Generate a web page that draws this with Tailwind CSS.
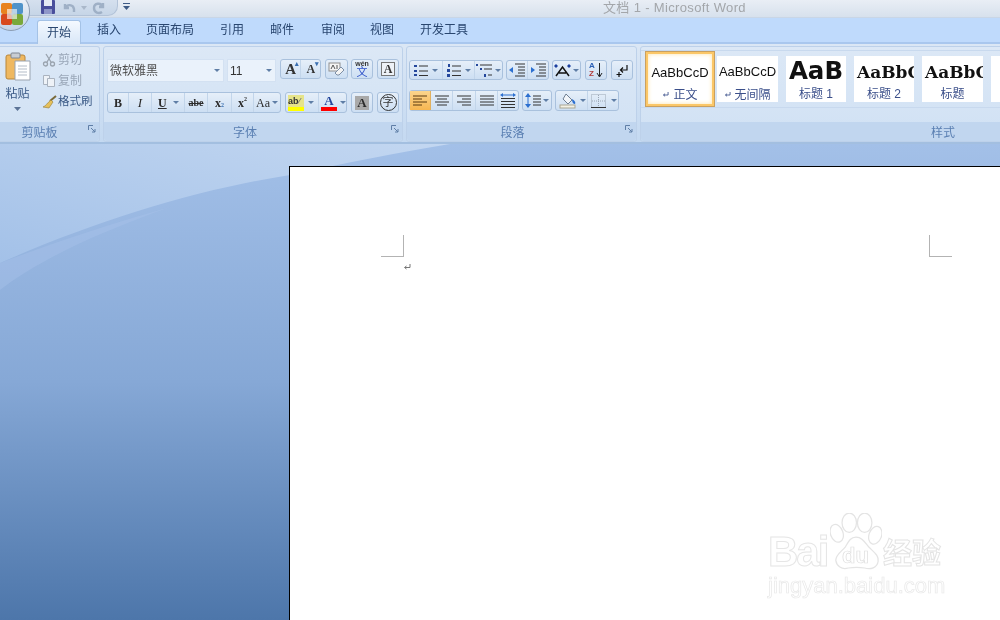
<!DOCTYPE html>
<html lang="en">
<head>
<meta charset="UTF-8">
<title>文档 1 - Microsoft Word</title>
<script src="https://cdn.jsdelivr.net/npm/@tailwindcss/browser@4"></script>
</head>
<body class="w-[1000px] h-[620px] overflow-hidden flex flex-col relative blur-[0.35px] font-['Liberation_Sans','Noto_Sans_CJK_SC',sans-serif] text-[12px]">

<!-- office button -->
<div class="absolute left-[-8px] top-[-8px] w-[38px] h-[39px] pt-[5px] pl-[1px] rounded-full bg-gradient-to-b from-[#f4f7fb] to-[#c3d3e6] border border-[#8c9db3] flex items-center justify-center z-10">
  <svg width="26" height="26" viewBox="0 0 26 26">
    <rect x="2" y="2" width="11" height="11" rx="2" fill="#e8821e"/>
    <rect x="13" y="2" width="11" height="11" rx="2" fill="#4f93c9"/>
    <rect x="2" y="13" width="11" height="11" rx="2" fill="#d8491d"/>
    <rect x="13" y="13" width="11" height="11" rx="2" fill="#79a83a"/>
    <path d="M8 8h10v10H8z" fill="#fff" opacity=".6"/>
    <path d="M13 8v10M8 13h10" stroke="#b9c4d2" stroke-width=".8"/>
  </svg>
</div>

<!-- title bar -->
<header class="h-[18px] shrink-0 flex bg-gradient-to-b from-[#e9eef5] to-[#d7e1ed] border-b border-[#c9d6e6]">
  <div class="w-[118px] h-[16px] pl-[40px] flex items-center rounded-br-[10px] bg-gradient-to-b from-[#d5e0ee] to-[#c6d5e7] border-r border-b border-[#b3c3d8]">
    <svg width="16" height="16" viewBox="0 0 16 16">
      <rect x="1" y="0" width="14" height="14" rx="1" fill="#4a4f9c"/>
      <rect x="4" y="0" width="8" height="6" fill="#e6ebf5"/>
      <rect x="4" y="9" width="8" height="5" fill="#8f97c9"/>
    </svg>
    <svg class="ml-[6px]" width="18" height="14" viewBox="0 0 18 14" fill="none" stroke="#9fb0c6" stroke-width="2.4">
      <path d="M3 3v4h4M3 7c2-4 8-4 9 1v3"/>
    </svg>
    <svg class="ml-[1px]" width="6" height="4" viewBox="0 0 6 4"><path d="M0 0h6L3 4z" fill="#aab8ca"/></svg>
    <svg class="ml-[4px]" width="15" height="14" viewBox="0 0 15 14" fill="none" stroke="#9fb0c6" stroke-width="2.4">
      <path d="M12 2v4H8M12 6C10 1 3 2 3 7s5 6 8 4"/>
    </svg>
  </div>
  <svg class="ml-[5px] mt-[2px]" width="7" height="8" viewBox="0 0 7 8"><path d="M0 1h7v1H0zM0 4h7L3.500 8z" fill="#3d5a85"/></svg>
  <div class="ml-[473px] mt-[-1px] text-[13px] leading-[18px] tracking-[0.35px] text-[#a3a6aa]">文档 1 - Microsoft Word</div>
</header>

<!-- tabs -->
<nav class="h-[26px] shrink-0 flex items-end bg-[#bfdafc] text-[#29466f] border-b-2 border-[#a9c7ee]">
  <div class="w-[37px]"></div>
  <div class="w-[44px] h-[24px] mb-[-2px] rounded-t-[3px] border border-b-0 border-[#a4c2e6] bg-gradient-to-b from-[#f4f9ff] to-[#d9e7f7] flex items-center justify-center">开始</div>
  <div class="w-[56px] h-[24px] flex items-center justify-center">插入</div>
  <div class="w-[66px] h-[24px] flex items-center justify-center">页面布局</div>
  <div class="w-[58px] h-[24px] flex items-center justify-center">引用</div>
  <div class="w-[42px] h-[24px] flex items-center justify-center">邮件</div>
  <div class="w-[60px] h-[24px] flex items-center justify-center">审阅</div>
  <div class="w-[38px] h-[24px] flex items-center justify-center">视图</div>
  <div class="w-[86px] h-[24px] flex items-center justify-center">开发工具</div>
</nav>

<!-- ribbon -->
<section class="h-[100px] shrink-0 flex gap-[3px] pt-[2px] bg-gradient-to-b from-[#dbe7f5] to-[#c4d9f1] border-b-2 border-[#a3bfe0]">

  <!-- clipboard -->
  <div class="w-[100px] h-[96px] shrink-0 flex flex-col rounded-r-[3px] border border-l-0 border-[#bdd1ea] bg-gradient-to-b from-[#dce8f6] to-[#d0e1f4]">
    <div class="h-[76px] flex">
      <div class="w-[35px] flex flex-col items-center pt-[5px] text-[#3b5a86]">
        <svg width="26" height="29" viewBox="0 0 26 29">
          <rect x="1" y="3" width="19" height="24" rx="2" fill="#efb860" stroke="#b8863b"/>
          <rect x="6" y="1" width="9" height="5" rx="1" fill="#c8cdd4" stroke="#7f8794"/>
          <path d="M10 9h15v19H10z" fill="#fff" stroke="#9aa3b0"/>
          <path d="M13 14h9M13 17h9M13 20h9M13 23h9" stroke="#b3bcc8"/>
        </svg>
        <div class="mt-[5px] leading-[16px]">粘贴</div>
        <svg class="mt-[5px]" width="7" height="4" viewBox="0 0 7 4"><path d="M0 0h7L3.500 4z" fill="#5b7396"/></svg>
      </div>
      <div class="ml-[7px] flex flex-col pt-[4px] gap-[3px]">
        <div class="h-[18px] flex items-center gap-[2px] text-[#9aa7b8]">
          <svg width="14" height="14" viewBox="0 0 14 14" fill="none" stroke="#9aa3ae" stroke-width="1.300"><path d="M4 1l5 8M10 1L5 9"/><circle cx="3.500" cy="11" r="2"/><circle cx="10.500" cy="11" r="2"/></svg>
          <span>剪切</span>
        </div>
        <div class="h-[18px] flex items-center gap-[2px] text-[#9aa7b8]">
          <svg width="14" height="14" viewBox="0 0 14 14" fill="#eef2f7" stroke="#aab3bf"><path d="M1.500 1.500h6v9h-6z"/><path d="M5.500 4.500h7v8h-7z"/></svg>
          <span>复制</span>
        </div>
        <div class="h-[18px] flex items-center gap-[1px] text-[#3b5a86]">
          <svg width="15" height="14" viewBox="0 0 15 14"><path d="M14 1L8 6" stroke="#7a6a3a" stroke-width="2"/><path d="M9 5l2 2-4 6-6-1c3-1 4-4 8-7z" fill="#e6c05a" stroke="#927a36" stroke-width=".6"/></svg>
          <span class="text-[11.500px]">格式刷</span>
        </div>
      </div>
    </div>
    <div class="h-[19px] pt-[3px] pr-[20px] relative flex items-center justify-center bg-[#c1d6ef] rounded-br-[3px] text-[#5a7fb2]">
      剪贴板
      <svg class="absolute right-[3px] top-[3px]" width="8" height="8" viewBox="0 0 8 8" fill="none" stroke="#5f7ea6"><path d="M.5 5V.5H5"/><path d="M3 3l4 4M7 4v3H4"/></svg>
    </div>
  </div>

  <!-- font -->
  <div class="w-[300px] h-[96px] shrink-0 flex flex-col rounded-[3px] border border-[#bdd1ea] bg-gradient-to-b from-[#dce8f6] to-[#d0e1f4]">
    <div class="h-[76px] pl-[3px] pt-[12px] flex flex-col gap-[10px]">
      <div class="flex items-start h-[23px]">
        <div class="w-[117px] h-[23px] flex items-center justify-between px-[2px] pr-[3px] bg-[#eaf2fb] border border-[#d3e1f2] text-[#4d4d4d]">微软雅黑
          <svg width="6" height="3" viewBox="0 0 6 3"><path d="M0 0h6L3 3z" fill="#5f7ea6"/></svg>
        </div>
        <div class="w-[49px] h-[23px] ml-[3px] flex items-center justify-between px-[2px] pr-[3px] bg-[#eaf2fb] border border-[#d3e1f2] text-[#333]">11
          <svg width="6" height="3" viewBox="0 0 6 3"><path d="M0 0h6L3 3z" fill="#5f7ea6"/></svg>
        </div>
        <div class="w-[41px] h-[20px] ml-[4px] flex border border-[#a9c1dd] rounded-[3px] bg-gradient-to-b from-[#e6eff9] to-[#cddff3] font-['Liberation_Serif',serif] font-bold text-[#333]">
          <div class="w-[21px] border-r border-[#c2d5ea] flex items-center justify-center text-[15px] leading-none relative">A<span class="absolute top-[1px] right-[1px] text-[7px] text-[#3a6fb0]">▴</span></div>
          <div class="w-[19px] flex items-center justify-center text-[12px] leading-none relative">A<span class="absolute top-[1px] right-[1px] text-[7px] text-[#3a6fb0]">▾</span></div>
        </div>
        <div class="w-[23px] h-[20px] ml-[4px] flex items-center justify-center border border-[#a9c1dd] rounded-[3px] bg-gradient-to-b from-[#e6eff9] to-[#cddff3]">
          <svg width="17" height="15" viewBox="0 0 17 15"><rect x="1" y="1" width="11" height="8" fill="#f5f5f5" stroke="#8f8f8f"/><path d="M3 7l2-4 2 4M9 3v4" stroke="#555" fill="none"/><path d="M7 11l6-6 3 3-5 5H9z" fill="#f4f4f4" stroke="#7d8fa6"/></svg>
        </div>
        <div class="w-[22px] h-[20px] ml-[3px] flex flex-col items-center justify-center border border-[#a9c1dd] rounded-[3px] bg-gradient-to-b from-[#e6eff9] to-[#cddff3] leading-none">
          <span class="text-[7px] font-bold text-[#333] leading-[7px]">wén</span>
          <span class="text-[11px] text-[#2c50c8] leading-[11px]">文</span>
        </div>
        <div class="w-[22px] h-[20px] ml-[4px] flex items-center justify-center border border-[#a9c1dd] rounded-[3px] bg-gradient-to-b from-[#e6eff9] to-[#cddff3]">
          <span class="w-[14px] h-[14px] border border-[#777] bg-[#eef2f7] flex items-center justify-center font-['Liberation_Serif',serif] font-bold text-[12px] text-[#333]">A</span>
        </div>
      </div>
      <div class="flex items-start h-[21px]">
        <div class="w-[174px] h-[21px] flex border border-[#a9c1dd] rounded-[3px] bg-gradient-to-b from-[#e6eff9] to-[#cddff3] font-['Liberation_Serif',serif] font-bold text-[#2b2b2b]">
          <div class="w-[21px] flex items-center justify-center text-[12px] border-r border-[#c2d5ea]">B</div>
          <div class="w-[23px] flex items-center justify-center text-[13px] italic font-normal border-r border-[#c2d5ea]">I</div>
          <div class="w-[33px] flex items-center justify-start pl-[6px] gap-[6px] text-[12px] underline border-r border-[#c2d5ea]">U<svg width="6" height="3" viewBox="0 0 6 3"><path d="M0 0h6L3 3z" fill="#5f7ea6"/></svg></div>
          <div class="w-[23px] flex items-center justify-center text-[10px] line-through border-r border-[#c2d5ea]">abe</div>
          <div class="w-[24px] flex items-center justify-center text-[12px] border-r border-[#c2d5ea]">x<span class="text-[6px] mt-[6px] text-[#3a6fb0]">2</span></div>
          <div class="w-[22px] flex items-center justify-center text-[12px] border-r border-[#c2d5ea]">x<span class="text-[6px] mb-[6px]">2</span></div>
          <div class="flex-1 flex items-center justify-center gap-[2px] text-[12px] font-normal">Aa<svg width="6" height="3" viewBox="0 0 6 3"><path d="M0 0h6L3 3z" fill="#5f7ea6"/></svg></div>
        </div>
        <div class="w-[62px] h-[21px] ml-[4px] flex border border-[#a9c1dd] rounded-[3px] bg-gradient-to-b from-[#e6eff9] to-[#cddff3]">
          <div class="w-[33px] flex items-center pl-[2px] gap-[4px] border-r border-[#c2d5ea]">
            <div class="w-[16px] flex flex-col items-stretch">
              <span class="text-[9px] leading-[12px] bg-[#e6e48a] text-[#333] font-bold">ab<span class="text-[#777]">⁄</span></span>
              <span class="h-[4px] bg-[#ffff00]"></span>
            </div>
            <svg width="6" height="3" viewBox="0 0 6 3"><path d="M0 0h6L3 3z" fill="#5f7ea6"/></svg>
          </div>
          <div class="flex-1 flex items-center pl-[2px] gap-[3px]">
            <div class="w-[16px] flex flex-col items-center">
              <span class="font-['Liberation_Serif',serif] font-bold text-[13px] leading-[12px] text-[#24479c]">A</span>
              <span class="w-[16px] h-[4px] bg-[#ff0000]"></span>
            </div>
            <svg width="6" height="3" viewBox="0 0 6 3"><path d="M0 0h6L3 3z" fill="#5f7ea6"/></svg>
          </div>
        </div>
        <div class="w-[22px] h-[21px] ml-[4px] flex items-center justify-center border border-[#a9c1dd] rounded-[3px] bg-gradient-to-b from-[#e6eff9] to-[#cddff3]">
          <span class="w-[14px] h-[14px] bg-[#a9a9a9] flex items-center justify-center font-['Liberation_Serif',serif] font-bold text-[13px] text-[#2b2b2b]">A</span>
        </div>
        <div class="w-[22px] h-[21px] ml-[4px] flex items-center justify-center border border-[#a9c1dd] rounded-[3px] bg-gradient-to-b from-[#e6eff9] to-[#cddff3]">
          <span class="w-[17px] h-[17px] rounded-full border border-[#333] flex items-center justify-center text-[11px] leading-none text-[#333]">字</span>
        </div>
      </div>
    </div>
    <div class="h-[19px] pt-[3px] pr-[16px] relative flex items-center justify-center bg-[#c1d6ef] rounded-b-[3px] text-[#5a7fb2]">
      字体
      <svg class="absolute right-[3px] top-[3px]" width="8" height="8" viewBox="0 0 8 8" fill="none" stroke="#5f7ea6"><path d="M.5 5V.5H5"/><path d="M3 3l4 4M7 4v3H4"/></svg>
    </div>
  </div>

  <!-- paragraph -->
  <div class="w-[231px] h-[96px] shrink-0 flex flex-col rounded-[3px] border border-[#bdd1ea] bg-gradient-to-b from-[#dce8f6] to-[#d0e1f4]">
    <div class="h-[76px] pl-[2px] pt-[13px] flex flex-col gap-[10px]">
      <div class="flex items-start h-[20px]">
        <div class="w-[94px] h-[20px] flex border border-[#a9c1dd] rounded-[3px] bg-gradient-to-b from-[#e6eff9] to-[#cddff3]">
          <div class="w-[33px] flex items-center justify-center gap-[4px] border-r border-[#c2d5ea]">
            <svg width="14" height="13" viewBox="0 0 14 13"><path d="M0 1h3v2H0zM0 6h3v2H0zM0 10h3v2H0z" fill="#24479c"/><path d="M5 2h9M5 7h9M5 11.500h9" stroke="#333"/></svg>
            <svg width="6" height="3" viewBox="0 0 6 3"><path d="M0 0h6L3 3z" fill="#5f7ea6"/></svg>
          </div>
          <div class="w-[32px] flex items-center justify-center gap-[4px] border-r border-[#c2d5ea]">
            <svg width="14" height="13" viewBox="0 0 14 13"><path d="M1 0h2v3H1zM0 5h3v3H0zM0 10h3v3H0z" fill="#24479c"/><path d="M5 2h9M5 7h9M5 11.500h9" stroke="#333"/></svg>
            <svg width="6" height="3" viewBox="0 0 6 3"><path d="M0 0h6L3 3z" fill="#5f7ea6"/></svg>
          </div>
          <div class="flex-1 flex items-center justify-center gap-[2px]">
            <svg width="17" height="14" viewBox="0 0 17 14"><path d="M0 1h2v2H0zM4 5h2v2H4zM8 11h2v3H8z" fill="#24479c"/><path d="M4 2h12M8 6h8M12 12h4" stroke="#333"/></svg>
            <svg width="6" height="3" viewBox="0 0 6 3"><path d="M0 0h6L3 3z" fill="#5f7ea6"/></svg>
          </div>
        </div>
        <div class="w-[43px] h-[20px] ml-[3px] flex border border-[#a9c1dd] rounded-[3px] bg-gradient-to-b from-[#e6eff9] to-[#cddff3]">
          <div class="w-[21px] flex items-center justify-center border-r border-[#c2d5ea]">
            <svg width="16" height="14" viewBox="0 0 16 14"><path d="M6 1h10M9 4h7M9 7h7M9 10h7M6 13h10" stroke="#333"/><path d="M0 7l4-3v6z" fill="#2b6fd0"/></svg>
          </div>
          <div class="flex-1 flex items-center justify-center">
            <svg width="16" height="14" viewBox="0 0 16 14"><path d="M6 1h10M9 4h7M9 7h7M9 10h7M6 13h10" stroke="#333"/><path d="M5 7L1 4v6z" fill="#2b6fd0"/></svg>
          </div>
        </div>
        <div class="w-[29px] h-[20px] ml-[3px] flex items-center justify-center gap-[2px] border border-[#a9c1dd] rounded-[3px] bg-gradient-to-b from-[#e6eff9] to-[#cddff3]">
          <svg width="17" height="14" viewBox="0 0 17 14"><path d="M2 13L8.500 4 15 13M5 10h7" stroke="#111" stroke-width="1.500" fill="none"/><path d="M0 3l2-2 2 2-2 2zM13 3l2-2 2 2-2 2z" fill="#1b3fa0"/></svg>
          <svg width="6" height="3" viewBox="0 0 6 3"><path d="M0 0h6L3 3z" fill="#5f7ea6"/></svg>
        </div>
        <div class="w-[22px] h-[20px] ml-[4px] flex items-center justify-center gap-[1px] border border-[#a9c1dd] rounded-[3px] bg-gradient-to-b from-[#e6eff9] to-[#cddff3]">
          <div class="flex flex-col font-bold text-[8px] leading-[8px]"><span class="text-[#2b5fb5]">A</span><span class="text-[#b13a3a]">Z</span></div>
          <svg width="7" height="15" viewBox="0 0 7 15"><path d="M3.500 0v13M1 10l2.500 4L6 10" stroke="#222" fill="none"/></svg>
        </div>
        <div class="w-[22px] h-[20px] ml-[4px] flex items-center justify-center border border-[#a9c1dd] rounded-[3px] bg-gradient-to-b from-[#e6eff9] to-[#cddff3]">
          <svg width="13" height="13" viewBox="0 0 13 13" fill="none" stroke="#111" stroke-width="1.200"><path d="M11 1v5H5M7 3.500L4.500 6 7 8.500"/><path d="M3 8v5M.5 10.500h5"/></svg>
        </div>
      </div>
      <div class="flex items-start h-[21px]">
        <div class="w-[110px] h-[21px] flex border border-[#a9c1dd] rounded-[3px] bg-gradient-to-b from-[#e6eff9] to-[#cddff3]">
          <div class="w-[21px] flex items-center justify-center bg-gradient-to-b from-[#fbd58c] to-[#f7b650] border-r border-[#e0b060]">
            <svg width="14" height="11" viewBox="0 0 14 11" stroke="#5a3a10"><path d="M0 1h14M0 4h9M0 7h14M0 10h9"/></svg>
          </div>
          <div class="w-[22px] flex items-center justify-center border-r border-[#c2d5ea]">
            <svg width="14" height="11" viewBox="0 0 14 11" stroke="#333"><path d="M0 1h14M2 4h10M0 7h14M2 10h10"/></svg>
          </div>
          <div class="w-[23px] flex items-center justify-center border-r border-[#c2d5ea]">
            <svg width="14" height="11" viewBox="0 0 14 11" stroke="#333"><path d="M0 1h14M5 4h9M0 7h14M5 10h9"/></svg>
          </div>
          <div class="w-[22px] flex items-center justify-center border-r border-[#c2d5ea]">
            <svg width="14" height="11" viewBox="0 0 14 11" stroke="#333"><path d="M0 1h14M0 4h14M0 7h14M0 10h14"/></svg>
          </div>
          <div class="flex-1 flex items-center justify-center">
            <svg width="16" height="15" viewBox="0 0 16 15"><path d="M1 5.500h14M1 8.500h14M1 11.500h14M1 14.500h14" stroke="#333"/><path d="M3 2h10" stroke="#2b6fd0"/><path d="M0 2l3-2v4zM16 2l-3-2v4z" fill="#2b6fd0"/></svg>
          </div>
        </div>
        <div class="w-[30px] h-[21px] ml-[3px] flex items-center justify-center gap-[2px] border border-[#a9c1dd] rounded-[3px] bg-gradient-to-b from-[#e6eff9] to-[#cddff3]">
          <svg width="16" height="15" viewBox="0 0 16 15"><path d="M3 2v11" stroke="#2b6fd0"/><path d="M0 4l3-4 3 4zM0 11l3 4 3-4z" fill="#2b6fd0"/><path d="M8 3h8M8 6h8M8 9h8M8 12h8" stroke="#333"/></svg>
          <svg width="6" height="3" viewBox="0 0 6 3"><path d="M0 0h6L3 3z" fill="#5f7ea6"/></svg>
        </div>
        <div class="w-[64px] h-[21px] ml-[3px] flex border border-[#a9c1dd] rounded-[3px] bg-gradient-to-b from-[#e6eff9] to-[#cddff3]">
          <div class="w-[32px] flex items-center pl-[3px] gap-[3px] border-r border-[#c2d5ea]">
            <svg width="18" height="16" viewBox="0 0 18 16"><path d="M7 1l6 6-4 4-5-5z" fill="#f2f5f9" stroke="#6f7f92"/><path d="M13 6c2 1 4 3 3 5-2 0-3-2-3-5z" fill="#2b6fd0"/><rect x="1" y="12" width="15" height="3" fill="#f3f1e4" stroke="#a9a694"/></svg>
            <svg width="6" height="3" viewBox="0 0 6 3"><path d="M0 0h6L3 3z" fill="#5f7ea6"/></svg>
          </div>
          <div class="flex-1 flex items-center pl-[3px] gap-[5px]">
            <svg width="15" height="14" viewBox="0 0 15 14" fill="none"><path d="M.5.500h14v13H.5zM7.500 1v12M1 7h13" stroke="#9aa6b5" stroke-dasharray="1 1"/><path d="M0 13.500h15" stroke="#333"/></svg>
            <svg width="6" height="3" viewBox="0 0 6 3"><path d="M0 0h6L3 3z" fill="#5f7ea6"/></svg>
          </div>
        </div>
      </div>
    </div>
    <div class="h-[19px] pt-[3px] pr-[18px] relative flex items-center justify-center bg-[#c1d6ef] rounded-b-[3px] text-[#5a7fb2]">
      段落
      <svg class="absolute right-[3px] top-[3px]" width="8" height="8" viewBox="0 0 8 8" fill="none" stroke="#5f7ea6"><path d="M.5 5V.5H5"/><path d="M3 3l4 4M7 4v3H4"/></svg>
    </div>
  </div>

  <!-- styles -->
  <div class="w-[606px] h-[96px] shrink-0 flex flex-col rounded-[3px] border border-[#bdd1ea] bg-gradient-to-b from-[#dce8f6] to-[#d0e1f4]">
    <div class="h-[76px] pt-[3px]">
      <div class="flex items-center gap-[3px] h-[58px] pl-[5px] border-y border-[#c8d9ee] text-center text-[#3b4f8a]">
        <div class="w-[68px] h-[54px] pb-[1px] bg-white border-2 border-[#fbc768] outline outline-[#c9a060] shadow-[inset_0_0_4px_#fde3a8] flex flex-col items-center justify-between pt-[9px]">
          <div class="text-[13px] leading-[20px] text-[#111] whitespace-nowrap">AaBbCcD</div>
          <div class="h-[16px] flex items-center gap-[4px]">
            <svg width="7" height="6" viewBox="0 0 8 7" fill="none" stroke="#3b4f8a"><path d="M7 0v3.500H2M3.500 2L1.500 3.500 3.500 5"/></svg>
            <span>正文</span>
          </div>
        </div>
        <div class="w-[61px] h-[46px] bg-white flex flex-col items-center justify-between pt-[6px] overflow-hidden">
          <div class="text-[13px] leading-[20px] text-[#111] whitespace-nowrap">AaBbCcD</div>
          <div class="h-[15px] flex items-center gap-[3px] whitespace-nowrap">
            <svg width="7" height="6" viewBox="0 0 8 7" fill="none" stroke="#3b4f8a"><path d="M7 0v3.500H2M3.500 2L1.500 3.500 3.500 5"/></svg>
            <span>无间隔</span>
          </div>
        </div>
        <div class="w-[60px] h-[46px] ml-[5px] bg-white flex flex-col items-center justify-between overflow-hidden">
          <div class="font-['DejaVu_Sans',sans-serif] font-bold text-[24.500px] leading-[30px] text-[#111] whitespace-nowrap">AaB</div>
          <div class="h-[15px] leading-[15px] whitespace-nowrap">标题 1</div>
        </div>
        <div class="w-[60px] h-[46px] ml-[5px] bg-white flex flex-col justify-between pt-[4px] pl-[3px] overflow-hidden">
          <div class="font-['DejaVu_Serif',serif] font-bold text-[17px] leading-[24px] text-[#111] whitespace-nowrap">AaBbC</div>
          <div class="h-[15px] leading-[15px] whitespace-nowrap pr-[3px]">标题 2</div>
        </div>
        <div class="w-[61px] h-[46px] ml-[5px] bg-white flex flex-col justify-between pt-[4px] pl-[3px] overflow-hidden">
          <div class="font-['DejaVu_Serif',serif] font-bold text-[17px] leading-[24px] text-[#111] whitespace-nowrap">AaBbC</div>
          <div class="h-[15px] leading-[15px] whitespace-nowrap pr-[3px]">标题</div>
        </div>
        <div class="w-[60px] h-[46px] ml-[5px] bg-white pt-[4px] pl-[3px] overflow-hidden">
          <div class="font-['DejaVu_Serif',serif] font-bold text-[17px] leading-[24px] text-[#111]">A</div>
        </div>
      </div>
    </div>
    <div class="h-[19px] pt-[3px] flex items-center justify-center bg-[#c1d6ef] rounded-b-[3px] text-[#5a7fb2]">样式</div>
  </div>
</section>

<!-- document area -->
<main class="flex-1 relative overflow-hidden bg-gradient-to-b from-[#a3c0e8] via-[#86a8d6] to-[#4d76aa] pl-[289px] pt-[22px]">
  <svg class="absolute left-0 top-0" width="1000" height="200" viewBox="0 0 1000 200">
    <defs>
      <linearGradient id="sw" x1="0" y1="1" x2="1" y2="0">
        <stop offset="0" stop-color="#a3c1e8"/>
        <stop offset="1" stop-color="#c3d7f1"/>
      </linearGradient>
    </defs>
    <path d="M0 119C100 75 200 45 290 31 340 20 400 8 450 0H0z" fill="url(#sw)"/>
    <path d="M0 146C40 115 100 88 170 63 110 80 50 100 0 119z" fill="#a9c4ea" opacity=".4"/>
  </svg>
  <div class="relative w-[800px] h-[520px] bg-white border-l border-t border-black pl-[91px] pt-[68px]">
    <div class="w-[571px] flex justify-between">
      <div class="w-[23px] h-[22px] border-r border-b border-[#b3b3b3]"></div>
      <div class="w-[23px] h-[22px] border-l border-b border-[#b3b3b3]"></div>
    </div>
    <svg class="ml-[22px] mt-[7px]" width="8" height="7" viewBox="0 0 8 7" fill="none" stroke="#777"><path d="M7 0v3.500H2M3.500 2L1.500 3.500 3.500 5"/></svg>
  </div>

  <!-- watermark -->
  <div class="absolute left-[768px] top-[367px] w-[180px] h-[88px] text-white">
    <span class="absolute left-0 top-[19px] font-bold text-[42px] leading-[44px] tracking-[-2px] [-webkit-text-stroke:1px_#e6e6e6]">Bai</span>
    <svg class="absolute left-[62px] top-[2px]" width="52" height="58" viewBox="0 0 54 60" fill="white" stroke="#e4e4e4" stroke-width="1.300">
      <ellipse cx="7" cy="21" rx="6.500" ry="9.500" transform="rotate(-20 7 21)"/>
      <ellipse cx="20" cy="10" rx="7.500" ry="10"/>
      <ellipse cx="36" cy="10" rx="7.500" ry="10"/>
      <ellipse cx="47" cy="23" rx="6.500" ry="9.500" transform="rotate(20 47 23)"/>
      <path d="M27 25c6 0 9 5 13 10 6 6 11 9 10 15-1 7-8 9-14 7-6-1-11-1-17 0-7 2-12-2-13-8 0-6 6-9 10-14 3-5 5-10 11-10z"/>
    </svg>
    <span class="absolute left-[74px] top-[34px] font-bold text-[22px] leading-[22px] text-white [-webkit-text-stroke:.7px_#dedede]">du</span>
    <span class="absolute left-[115px] top-[26px] text-[29px] leading-[34px] font-bold [-webkit-text-stroke:1px_#e4e4e4]">经验</span>
    <span class="absolute left-0 top-[62px] text-[22px] leading-[26px] whitespace-nowrap [-webkit-text-stroke:.7px_#e8e8e8]">jingyan.baidu.com</span>
  </div>
</main>
</body>
</html>
